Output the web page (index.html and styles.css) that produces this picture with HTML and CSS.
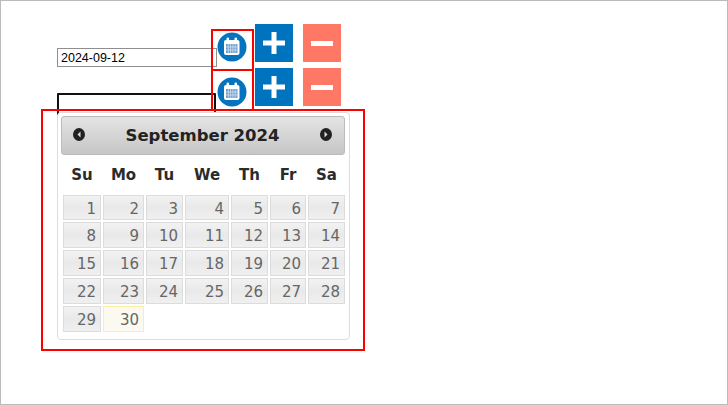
FILE: index.html
```html
<!DOCTYPE html>
<html lang="en">
<head>
  <meta charset="UTF-8">
  <title>Date picker</title>
  <link rel="stylesheet" href="styles.css">
</head>
<body>

<div class="frame">
  <div class="form-row">
    <input class="date-input" type="text" value="2024-09-12">
    <span class="cal-btn">
      <svg width="30" height="30" viewBox="0 0 30 30"><circle cx="15" cy="15" r="14.5" fill="#0573bd"/><rect x="7" y="8" width="15.5" height="15" rx="2" fill="#fff"/><rect x="9.5" y="5.5" width="2.6" height="5" rx="1.2" fill="#fff"/><rect x="17.5" y="5.5" width="2.6" height="5" rx="1.2" fill="#fff"/><rect x="9" y="12" width="11.5" height="9" fill="#6f9fd0"/><path d="M11.3 12v9M13.6 12v9M15.9 12v9M18.2 12v9M9 15h11.5M9 18h11.5" stroke="#dbe8f5" stroke-width=".7"/></svg>
    </span>
    <span class="btn-add"><svg width="22" height="22" viewBox="0 0 22 22"><path d="M8.5 0h5v8.5H22v5h-8.5V22h-5v-8.5H0v-5h8.5z" fill="#fff"/></svg></span>
    <span class="btn-remove"><i></i></span>
  </div>
  <div class="form-row">
    <input class="date-input active" type="text">
    <span class="cal-btn">
      <svg width="30" height="30" viewBox="0 0 30 30"><circle cx="15" cy="15" r="14.5" fill="#0573bd"/><rect x="7" y="8" width="15.5" height="15" rx="2" fill="#fff"/><rect x="9.5" y="5.5" width="2.6" height="5" rx="1.2" fill="#fff"/><rect x="17.5" y="5.5" width="2.6" height="5" rx="1.2" fill="#fff"/><rect x="9" y="12" width="11.5" height="9" fill="#6f9fd0"/><path d="M11.3 12v9M13.6 12v9M15.9 12v9M18.2 12v9M9 15h11.5M9 18h11.5" stroke="#dbe8f5" stroke-width=".7"/></svg>
    </span>
    <span class="btn-add"><svg width="22" height="22" viewBox="0 0 22 22"><path d="M8.5 0h5v8.5H22v5h-8.5V22h-5v-8.5H0v-5h8.5z" fill="#fff"/></svg></span>
    <span class="btn-remove"><i></i></span>
  </div>

  <!-- datepicker popup -->
  <div class="datepicker">
    <div class="dp-header">
      <svg class="dp-nav" width="12" height="13" viewBox="0 0 12 13"><ellipse cx="6" cy="6.5" rx="6" ry="6.5" fill="#222"/><path d="M7.5 3.5v6L4.5 6.5z" fill="#ddd"/></svg>
      <span class="dp-title">September 2024</span>
      <svg class="dp-nav" width="12" height="13" viewBox="0 0 12 13"><ellipse cx="6" cy="6.5" rx="6" ry="6.5" fill="#222"/><path d="M4.5 3.5v6L7.5 6.5z" fill="#ddd"/></svg>
    </div>
    <div class="dp-week">
      <span>Su</span><span>Mo</span><span>Tu</span><span>We</span><span>Th</span><span>Fr</span><span>Sa</span>
    </div>
    <div class="dp-days">
      <a>1</a><a>2</a><a>3</a><a>4</a><a>5</a><a>6</a><a>7</a>
      <a>8</a><a>9</a><a>10</a><a>11</a><a>12</a><a>13</a><a>14</a>
      <a>15</a><a>16</a><a>17</a><a>18</a><a>19</a><a>20</a><a>21</a>
      <a>22</a><a>23</a><a>24</a><a>25</a><a>26</a><a>27</a><a>28</a>
      <a>29</a><a class="today">30</a>
    </div>
  </div>

  <!-- red annotation boxes -->
  <div class="mark mark-a"></div>
  <div class="mark mark-b"></div>
  <div class="mark mark-c"></div>
</div>

</body>
</html>
```

FILE: styles.css
```css
body { margin: 0; background: #fff; font-family: "DejaVu Sans", sans-serif; }
.frame { position: relative; box-sizing: border-box; width: 728px; height: 405px; border: 1px solid #bbb; padding: 23px 0 0 56px; overflow: hidden; }

.form-row { display: flex; align-items: flex-start; height: 38px; margin-bottom: 6px; }
.date-input { box-sizing: border-box; width: 160px; height: 19px; margin: 24px 0 0 0; padding: 0 3px; border: 1px solid #8f8f8f; font-family: "Liberation Sans", sans-serif; font-size: 12.5px; color: #000; background: #fff; outline: none; }
.date-input.active { width: 159px; height: 24px; margin-top: 25px; border: 2px solid #111; border-radius: 1px; }
.cal-btn { display: block; width: 30px; height: 30px; margin: 8px 8px 0 0; flex: none; }
.form-row + .form-row .cal-btn { margin-top: 9px; margin-left: 1px; }
.cal-btn svg { display: block; }
.btn-add, .btn-remove { display: flex; align-items: center; justify-content: center; width: 38px; height: 38px; flex: none; }
.btn-add { background: #0073bf; margin-right: 10px; }
.btn-remove { background: #ff7866; }
.btn-remove i { display: block; width: 22px; height: 5px; background: #fff; }

.datepicker { position: absolute; left: 56px; top: 111px; box-sizing: border-box; width: 293px; height: 228px; padding: 3px 4px; background: #fff; border: 1px solid #ddd; border-radius: 4px; }
.dp-header { box-sizing: border-box; display: flex; align-items: center; justify-content: space-between; height: 39px; padding: 0 12px 2px 11px; margin-left: -1px; background: linear-gradient(#e4e4e4, #c6c6c6); border: 1px solid #bbb; border-radius: 3px; }
.dp-title { margin-top: 2px; font-size: 16.5px; font-weight: bold; color: #222; }
.dp-nav { display: block; }

.dp-week, .dp-days { display: grid; grid-template-columns: 38px 41px 37px 44px 37px 36px 37px; column-gap: 2px; margin: 0 1px; }
.dp-week { height: 40px; align-items: center; text-align: center; font-size: 15px; font-weight: bold; color: #2b2b2b; }
.dp-days { grid-template-rows: 25px 26px 26px 26px 26px; row-gap: 2px; }
.dp-days a { box-sizing: border-box; padding-right: 4px; text-align: right; font-size: 15px; line-height: 26px; color: #666; background: linear-gradient(#f2f2f2, #e9e9e9 50%, #f0f0f0); border: 1px solid #dcdcdc; }
.dp-days a.today { background: #fcfaf0; border-color: #fcefa1; }

.mark { position: absolute; box-sizing: border-box; border: 2px solid #f00; }
.mark-a { left: 210px; top: 28px; width: 43px; height: 42px; }
.mark-b { left: 210px; top: 68px; width: 43px; height: 42px; }
.mark-c { left: 40px; top: 108px; width: 324px; height: 242px; }
```
